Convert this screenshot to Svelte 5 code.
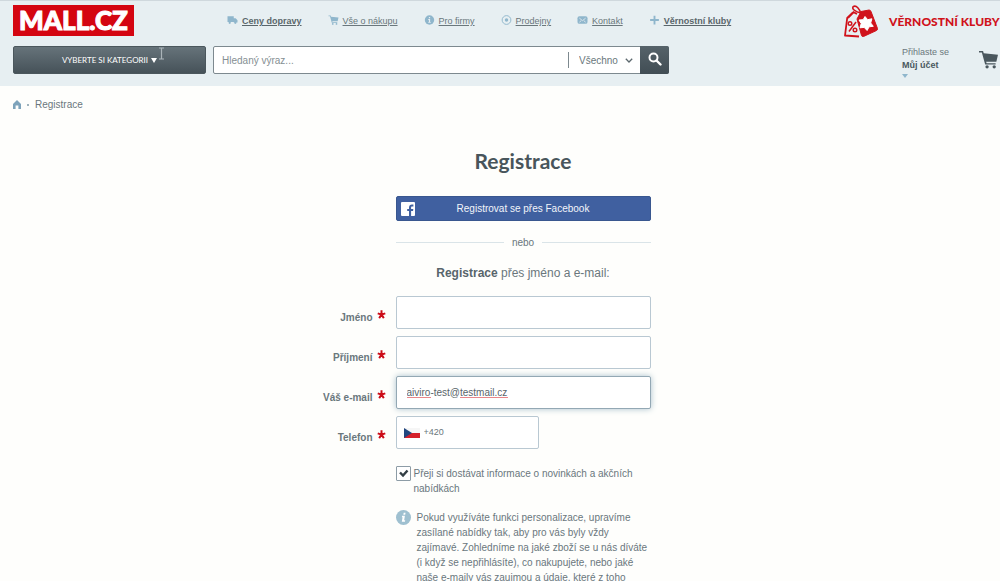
<script lang="ts">
  type NavItem = { icon: string; label: string; bold?: boolean };

  const nav: NavItem[] = [
    { icon: 'truck', label: 'Ceny dopravy', bold: true },
    { icon: 'cart', label: 'Vše o nákupu' },
    { icon: 'info', label: 'Pro firmy' },
    { icon: 'target', label: 'Prodejny' },
    { icon: 'mail', label: 'Kontakt' },
    { icon: 'plus', label: 'Věrnostní kluby', bold: true }
  ];

  let firstName = $state('');
  let lastName = $state('');
  let email = $state('aiviro-test@testmail.cz');
  let phone = $state('+420');
  let query = $state('');
  let newsletter = $state(true);
</script>

{#snippet cart()}
  <path d="M0 .8h3.400l.6 2L16 4 14.600 9.800H6l.4 1.400H14v1H5.200L2.400 2H0z" />
  <circle cx="6.8" cy="14.2" r="1.4" />
  <circle cx="12.8" cy="14.2" r="1.4" />
{/snippet}

{#snippet star()}
  <svg class="required" viewBox="0 0 10 10" aria-hidden="true">
    <path d="M5 5.200V.4M5 5.200.8 3.800M5 5.200l4.200-1.400M5 5.200 2.400 9M5 5.200 7.600 9" stroke="#cc0c18" stroke-width="2.200" />
  </svg>
{/snippet}

<header class="header">
  <div class="top-row">
    <a class="logo" href="/">MALL.CZ</a>

    <nav class="nav" aria-label="Informace">
      {#each nav as item (item.label)}
        <a href="/" class:bold={item.bold}>
          <svg viewBox="0 0 16 16" fill="#8fb6cc" aria-hidden="true">
            {#if item.icon === 'truck'}
              <path d="M0 2h10v9H0zM10 5h3l3 3.500V12h-6z" />
              <circle cx="3.5" cy="12.5" r="1.8" />
              <circle cx="12.5" cy="12.5" r="1.8" />
            {:else if item.icon === 'cart'}
              {@render cart()}
            {:else if item.icon === 'info'}
              <circle cx="8" cy="8" r="7.5" />
              <path d="M6 6.5h3V11h1v1.5H6V11h1V8H6zM7 3.2h2v2H7z" fill="#e7eef2" />
            {:else if item.icon === 'target'}
              <circle cx="8" cy="8" r="7" fill="none" stroke="#8fb6cc" stroke-width="1.5" />
              <circle cx="8" cy="8" r="2.8" />
            {:else if item.icon === 'mail'}
              <rect y="2" width="16" height="12" rx="3" />
              <path d="m3 5 5 4 5-4M3 11.5l3-2.5M13 11.5 10 9" fill="none" stroke="#e7eef2" stroke-width="1.3" />
            {:else}
              <path d="M6.5 1h3v5.5H15v3H9.5V15h-3V9.5H1v-3h5.5z" />
            {/if}
          </svg>
          <span>{item.label}</span>
        </a>
      {/each}
    </nav>

    <a class="club" href="/">
      <svg viewBox="0 0 36 34" aria-hidden="true">
        <path d="M10 8.5 4.2 14 2 31.5 16 32.5" fill="none" stroke="#d0121b" stroke-width="1.8" stroke-linejoin="round" />
        <path d="M14 10 10.5 8.2 5 14" fill="none" stroke="#d0121b" stroke-width="1.8" />
        <path d="m14 15 4-7.500L26 6q1.500 0 2 1.500l6.500 17q.3 1.500-1 2l-13 6q-1.500.4-2-1z" fill="#d0121b" stroke="#d0121b" stroke-linejoin="round" />
        <path d="M18 10C17 5 13 .8 10.500 2.500S12 8 18 9" fill="none" stroke="#d0121b" stroke-width="1.600" />
        <path d="m22 12.500 2.700 3.200 4.200-.9-1.200 4.200 2.600 3.300-4.200.5-2 3.700-2.900-3.100-4.200.4 1.200-4.300-2.200-3.500 4.200-.3z" fill="#fff" stroke="#fff" stroke-linejoin="round" />
        <circle cx="7" cy="19.5" r="1.8" fill="none" stroke="#d0121b" stroke-width="1.4" />
        <circle cx="12" cy="26" r="1.8" fill="none" stroke="#d0121b" stroke-width="1.4" />
        <path d="m13 18-7 9.5" stroke="#d0121b" stroke-width="1.5" />
      </svg>
      <span>VĚRNOSTNÍ KLUBY</span>
    </a>
  </div>

  <div class="tool-row">
    <button class="category" type="button">
      VYBERTE SI KATEGORII
      <svg class="arrow" viewBox="0 0 6 5" aria-hidden="true"><path d="M0 0h6L3 5z" fill="#fff" /></svg>
      <svg class="caret" viewBox="0 0 7 13" aria-hidden="true">
        <path d="M1 1h2l.5.7L4 1h2M3.5 1.5v10M1 12h2l.5-.7.5.7h2" fill="none" stroke="#aab4b9" stroke-width="1.2" />
      </svg>
    </button>

    <form class="search" role="search" onsubmit={(e) => e.preventDefault()}>
      <input type="text" aria-label="Hledat" placeholder="Hledaný výraz..." bind:value={query} />
      <div class="scope">
        <select aria-label="Kategorie">
          <option>Všechno</option>
        </select>
        <svg viewBox="0 0 8 5" aria-hidden="true">
          <path d="m.8.8 3.2 3.2L7.200.8" fill="none" stroke="#5c686e" stroke-width="1.3" />
        </svg>
      </div>
      <button type="submit" aria-label="Hledat">
        <svg viewBox="0 0 14 14" aria-hidden="true">
          <circle cx="5.500" cy="5.500" r="4" fill="none" stroke="#fff" stroke-width="2" />
          <path d="m8.500 8.500 4 4" stroke="#fff" stroke-width="2.400" stroke-linecap="round" />
        </svg>
      </button>
    </form>

    <div class="user">
      <a class="account" href="/">
        <span>Přihlaste se</span>
        <strong>Můj účet</strong>
        <svg viewBox="0 0 6 4" aria-hidden="true"><path d="M0 0h6L3 4z" fill="#8fb6cc" /></svg>
      </a>
      <a class="basket" href="/" aria-label="Košík">
        <svg viewBox="0 0 16 16" fill="#4a575e" aria-hidden="true">{@render cart()}</svg>
      </a>
    </div>
  </div>
</header>

<nav class="breadcrumb" aria-label="Drobečková navigace">
  <a href="/" aria-label="Domů">
    <svg viewBox="0 0 8 9" aria-hidden="true">
      <path d="M4 0 0 4v5h2.600V5.500h2.800V9H8V4z" fill="#7ea3bb" />
    </svg>
  </a>
  <i></i>
  <span>Registrace</span>
</nav>

<main class="main">
  <h1>Registrace</h1>

  <button class="facebook" type="button">
    <svg viewBox="0 0 14 14" aria-hidden="true">
      <rect width="14" height="14" rx="1" fill="#fff" />
      <path d="M8 14V9H6.200V7H8V5.400C8 3.400 9.200 2.400 11 2.400h1.400v2h-1.200c-.9 0-1.100.4-1.100 1.100V7h2.200L12 9h-1.900v5z" fill="#4060a0" />
    </svg>
    <span>Registrovat se přes Facebook</span>
  </button>

  <div class="divider"><span>nebo</span></div>

  <p class="subtitle"><strong>Registrace</strong> přes jméno a e-mail:</p>

  <form class="form" onsubmit={(e) => e.preventDefault()}>
    <label for="first-name">Jméno {@render star()}</label>
    <input id="first-name" type="text" bind:value={firstName} />

    <label for="last-name">Příjmení {@render star()}</label>
    <input id="last-name" type="text" bind:value={lastName} />

    <label for="email">Váš e-mail {@render star()}</label>
    <div class="email">
      <input id="email" type="text" spellcheck="false" bind:value={email} />
      <span class="typo user-name"></span>
      <span class="typo domain"></span>
    </div>

    <label for="phone">Telefon {@render star()}</label>
    <div class="phone">
      <svg viewBox="0 0 16 10" aria-hidden="true">
        <path d="M0 0h16v5H0z" fill="#f6f6f6" />
        <path d="M0 5h16v5H0z" fill="#d5202b" />
        <path d="M0 0l8 5-8 5z" fill="#23477f" />
      </svg>
      <input id="phone" type="tel" bind:value={phone} />
    </div>

    <div class="newsletter">
      <input id="newsletter" type="checkbox" bind:checked={newsletter} />
      <label for="newsletter">Přeji si dostávat informace o novinkách a akčních nabídkách</label>
    </div>

    <div class="notice">
      <svg viewBox="0 0 16 16" aria-hidden="true">
        <circle cx="8" cy="8" r="8" fill="#9fc0d0" />
        <path d="M8.200 3h2l-.4 2h-2zM6.500 6.200h3L8.700 11h1.100l-.3 1.500H6.200l.8-4.800h-.8z" fill="#fff" />
      </svg>
      <p>
        Pokud využíváte funkci personalizace, upravíme zasílané nabídky tak, aby pro vás byly vždy
        zajímavé. Zohledníme na jaké zboží se u nás díváte (i když se nepřihlásíte), co nakupujete,
        nebo jaké naše e-maily vás zaujmou a údaje, které z toho
      </p>
    </div>
  </form>
</main>

<style>
  :global(body) {
    background: #fefefc;
    color: #6a777c;
    font: 10px/15px "Liberation Sans", Arial, sans-serif;
    overflow: hidden;
  }

  :global(*) {
    box-sizing: border-box;
  }

  a {
    color: inherit;
  }

  svg {
    display: block;
    flex: none;
  }

  button,
  input,
  select {
    font: inherit;
    color: inherit;
    margin: 0;
    outline: none;
  }

  button {
    cursor: pointer;
  }

  /* Header */
  .header {
    background: #e7eff2;
    border-top: 1px solid #cfd8dd;
    padding: 4px 0 12px 13px;
    overflow: hidden;
  }

  .top-row {
    display: flex;
    align-items: center;
    margin-bottom: 10px;
  }

  .logo {
    width: 121px;
    height: 31px;
    background: #d40511;
    color: #fff;
    font: 900 26px/31px Lato, sans-serif;
    text-align: center;
    text-decoration: none;
    -webkit-text-stroke: 1px #fff;
  }

  .nav {
    display: flex;
    gap: 26px;
    margin-left: 93px;
    padding-top: 2px;
    font-size: 9px;
    white-space: nowrap;
  }

  .nav a {
    display: flex;
    gap: 4px;
    text-decoration: none;
  }

  .nav a span {
    text-decoration: underline;
  }

  .nav svg {
    width: 11px;
    height: 10px;
    margin-top: 1px;
  }

  .nav .bold {
    font-weight: bold;
    color: #5a666b;
  }

  .club {
    display: flex;
    align-items: center;
    gap: 10px;
    width: 157px;
    margin-left: auto;
    color: #d0121b;
    font: 900 12px/20px Lato, sans-serif;
    text-decoration: none;
    white-space: nowrap;
  }

  .club span {
    padding-top: 3px;
  }

  .club svg {
    width: 36px;
    height: 34px;
    margin: -1px 0 -2px;
  }

  .tool-row {
    display: flex;
    align-items: flex-start;
  }

  .category {
    position: relative;
    display: flex;
    align-items: center;
    justify-content: center;
    gap: 3px;
    width: 193px;
    height: 28px;
    padding: 0;
    border: 1px solid #4b575d;
    border-radius: 2px;
    background: linear-gradient(#66737a, #465259);
    color: #fff;
    font: 8px/15px Lato, sans-serif;
  }

  .arrow {
    width: 6px;
    height: 5px;
  }

  .caret {
    position: absolute;
    top: 0;
    right: 40px;
    width: 7px;
    height: 13px;
  }

  .search {
    display: flex;
    flex: 0 1 456px;
    height: 28px;
    margin-left: 7px;
    border: 1px solid #7d898f;
    border-radius: 2px;
    background: #fff;
  }

  .search input {
    flex: 1;
    min-width: 0;
    padding: 0 8px;
    border: 0;
    background: none;
  }

  .search input::placeholder {
    color: #858f93;
  }

  .scope {
    display: flex;
    align-items: center;
    align-self: center;
    width: 73px;
    height: 16px;
    padding-right: 8px;
    border-left: 1px solid #7d898f;
  }

  .scope select {
    flex: 1;
    padding: 0 0 0 10px;
    border: 0;
    background: none;
    appearance: none;
  }

  .scope svg {
    width: 8px;
    height: 5px;
  }

  .search button {
    display: flex;
    justify-content: center;
    width: 29px;
    margin: -1px;
    padding: 6px 0;
    border: 0;
    border-radius: 0 2px 2px 0;
    background: linear-gradient(#56636a, #414d54);
  }

  .search button svg {
    width: 14px;
    height: 14px;
  }

  .user {
    display: flex;
    gap: 30px;
    width: 98px;
    height: 27px;
    margin-left: auto;
    font-size: 9px;
    line-height: 13px;
    white-space: nowrap;
  }

  .account {
    text-decoration: none;
  }

  .account span,
  .account strong {
    display: block;
  }

  .account strong {
    color: #4a575e;
  }

  .account svg {
    width: 6px;
    height: 4px;
    margin-top: 2px;
  }

  .basket svg {
    width: 19px;
    height: 19px;
    margin-top: 4px;
  }

  /* Breadcrumb */
  .breadcrumb {
    display: flex;
    align-items: center;
    gap: 6px;
    padding: 11px 13px;
  }

  .breadcrumb svg {
    width: 8px;
    height: 9px;
  }

  .breadcrumb i {
    width: 2px;
    height: 2px;
    background: #9fb3bd;
  }

  /* Registration */
  .main {
    display: grid;
    grid-template-columns: 1fr 255px 1fr;
    padding-left: 46px;
  }

  .main > * {
    grid-column: 2;
  }

  h1 {
    margin: 24px 0 21px;
    color: #48555b;
    font: bold 21px/28px Lato, sans-serif;
    text-align: center;
  }

  .facebook {
    display: flex;
    align-items: center;
    height: 25px;
    padding: 0 18px 0 4px;
    border: 1px solid #39578f;
    border-radius: 2px;
    background: #4060a0;
    color: #f2f5fa;
  }

  .facebook svg {
    width: 14px;
    height: 14px;
  }

  .facebook span {
    flex: 1;
  }

  .divider {
    display: flex;
    align-items: center;
    gap: 8px;
    margin: 14px 0;
  }

  .divider::before,
  .divider::after {
    content: '';
    flex: 1;
    height: 1px;
    background: #dae4e8;
  }

  .subtitle {
    margin: 0 0 14px;
    font-size: 12px;
    line-height: 18px;
    text-align: center;
  }

  .subtitle strong {
    color: #58656b;
  }

  .main .form {
    grid-column: 1 / -1;
    display: grid;
    grid-template-columns: 1fr 255px 1fr;
    row-gap: 7px;
  }

  .form > * {
    grid-column: 2;
  }

  .form > label {
    grid-column: 1;
    display: flex;
    justify-content: flex-end;
    gap: 4px;
    padding: 14px 10px 0 0;
    font-weight: bold;
  }

  .required {
    width: 9px;
    height: 9px;
  }

  .form input[type='text'],
  .phone {
    width: 100%;
    height: 33px;
    padding: 0 10px;
    border: 1px solid #b9c8d2;
    border-radius: 2px;
    background: #fff;
  }

  .email {
    position: relative;
  }

  .form .email input {
    border-color: #93a8b4;
    box-shadow: 0 0 6px #a9c0cc;
    color: #59656a;
  }

  .typo {
    position: absolute;
    top: 21px;
    height: 1px;
    background: #e8868a;
  }

  .user-name {
    left: 11px;
    width: 24px;
  }

  .domain {
    left: 64px;
    width: 48px;
  }

  .form .phone {
    display: flex;
    align-items: center;
    gap: 4px;
    width: 143px;
    padding: 0 7px;
  }

  .phone svg {
    width: 16px;
    height: 10px;
  }

  .phone input {
    flex: 1;
    min-width: 0;
    padding: 0;
    border: 0;
    background: none;
    font-size: 9px;
  }

  .newsletter {
    display: flex;
    gap: 3px;
    margin-top: 10px;
  }

  .newsletter input {
    appearance: none;
    flex: none;
    width: 15px;
    height: 15px;
    border: 1px solid #8d9ca6;
    border-radius: 1px;
    background: #fff;
  }

  .newsletter input:checked {
    background: #fff url("data:image/svg+xml,%3Csvg xmlns='http://www.w3.org/2000/svg' viewBox='0 0 13 13'%3E%3Cpath d='M3 5.500l3 3 4.500-5' fill='none' stroke='%23333f46' stroke-width='2.400'/%3E%3C/svg%3E");
  }

  .notice {
    display: flex;
    gap: 6px;
    margin-top: 7px;
  }

  .notice svg {
    width: 15px;
    height: 15px;
  }

  .notice p {
    margin: 0;
  }
</style>
